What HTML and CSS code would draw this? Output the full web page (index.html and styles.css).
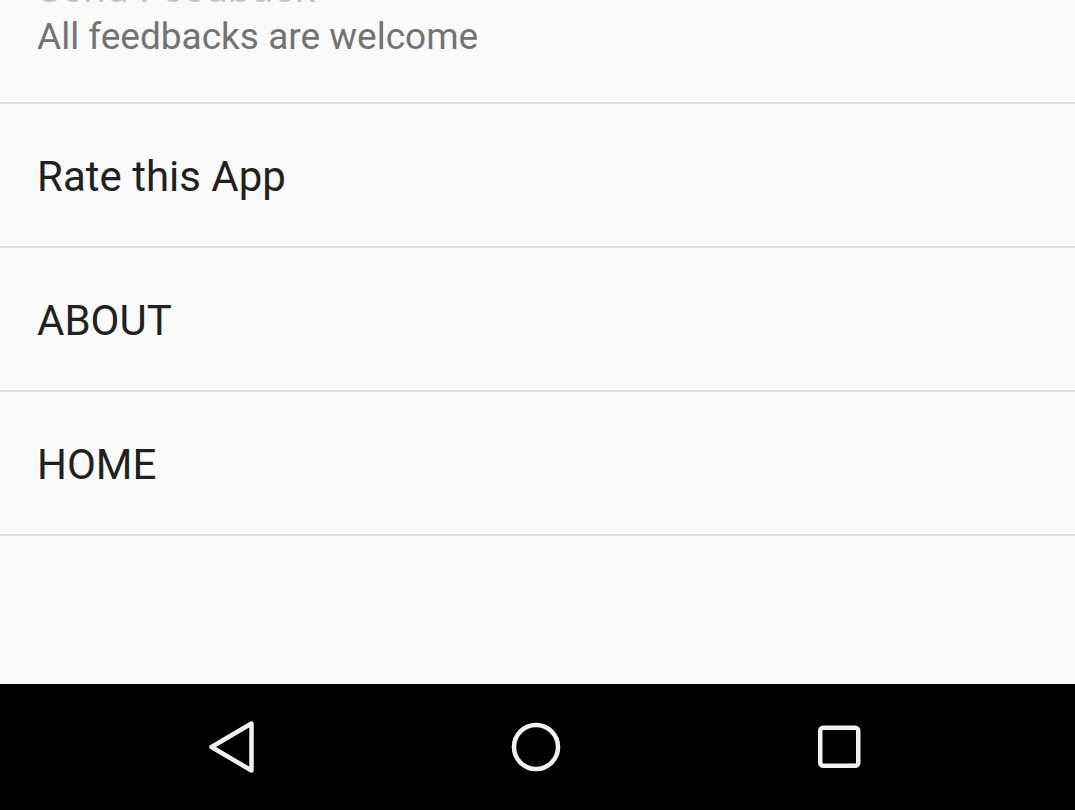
FILE: index.html
```html
<!DOCTYPE html>
<html>
<head>
<meta charset="utf-8">
<link rel="stylesheet" href="styles.css">
</head>
<body>
<div class="screen">
  <div class="list">
    <div class="item item-two">
      <div class="title">Send Feedback</div>
      <div class="subtitle">All feedbacks are welcome</div>
    </div>
    <div class="item"><span class="label">Rate this App</span></div>
    <div class="item"><span class="label">ABOUT</span></div>
    <div class="item"><span class="label">HOME</span></div>
  </div>
  <div class="navbar">
    <div class="navbtn">
      <svg width="56" height="56" viewBox="0 0 56 56"><path d="M6.5 28 L46.5 4.5 L46.5 51.5 Z" fill="none" stroke="#f2f2f2" stroke-width="4.5" stroke-linejoin="round"/></svg>
    </div>
    <div class="navbtn">
      <svg width="56" height="56" viewBox="0 0 56 56"><circle cx="28" cy="28" r="22" fill="none" stroke="#f2f2f2" stroke-width="4.5"/></svg>
    </div>
    <div class="navbtn">
      <svg width="56" height="56" viewBox="0 0 56 56"><rect x="9.25" y="8.75" width="38" height="38" rx="3" fill="none" stroke="#f2f2f2" stroke-width="4.5"/></svg>
    </div>
  </div>
</div>
</body>
</html>
```
FILE: styles.css
```css
html, body {
  margin: 0;
  padding: 0;
  background: #fafafa;
}
body {
  font-family: Roboto, "Noto Sans", sans-serif;
  overflow: hidden;
}
.screen {
  width: 1075px;
  height: 810px;
  display: flex;
  flex-direction: column;
  overflow: hidden;
}
.list {
  flex: 1;
  overflow: hidden;
}
.item {
  box-sizing: border-box;
  height: 144px;
  padding: 4px 0 0 37px;
  display: flex;
  align-items: center;
  border-bottom: 2px solid #dfdfdf;
}
.item-two {
  height: 138px;
  margin-top: -34px;
  padding-top: 0;
  flex-direction: column;
  align-items: flex-start;
  justify-content: flex-start;
}
.title {
  font-size: 41px;
  line-height: 44px;
  margin-bottom: 5px;
  color: #c4c4c4;
}
.subtitle {
  font-size: 37px;
  line-height: 44px;
  color: #737373;
}
.label {
  font-size: 42px;
  line-height: 48px;
  color: #212121;
}
.navbar {
  height: 126px;
  background: #000;
  display: grid;
  grid-template-columns: repeat(3, 303px);
  padding-left: 81px;
  align-items: center;
  justify-items: center;
}
.navbtn {
  width: 56px;
  height: 56px;
}
.navbtn svg {
  display: block;
}
```
